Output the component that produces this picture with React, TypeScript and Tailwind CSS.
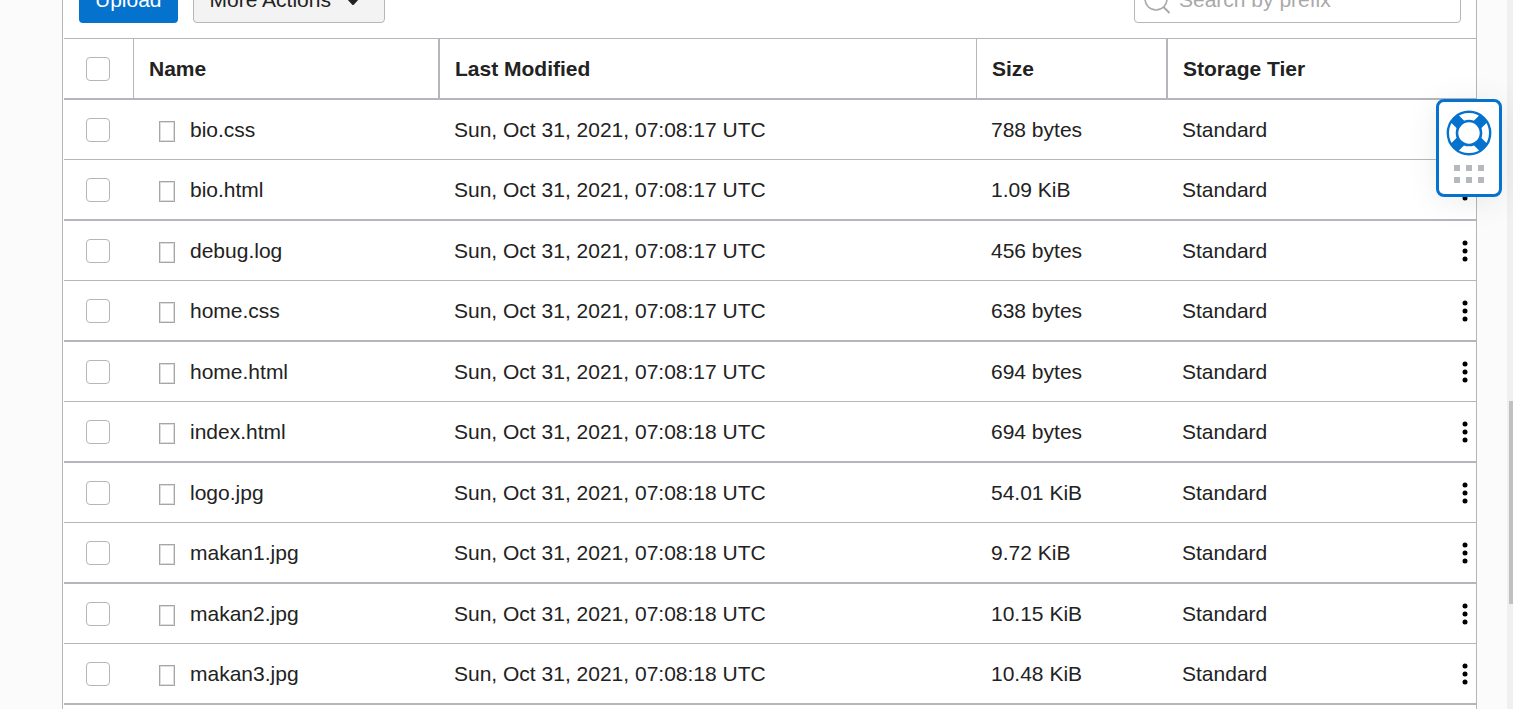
import React from "react";

type StoredObject = { name: string; modified: string; size: string; tier: string };

const objects: StoredObject[] = [
  { name: "bio.css", modified: "Sun, Oct 31, 2021, 07:08:17 UTC", size: "788 bytes", tier: "Standard" },
  { name: "bio.html", modified: "Sun, Oct 31, 2021, 07:08:17 UTC", size: "1.09 KiB", tier: "Standard" },
  { name: "debug.log", modified: "Sun, Oct 31, 2021, 07:08:17 UTC", size: "456 bytes", tier: "Standard" },
  { name: "home.css", modified: "Sun, Oct 31, 2021, 07:08:17 UTC", size: "638 bytes", tier: "Standard" },
  { name: "home.html", modified: "Sun, Oct 31, 2021, 07:08:17 UTC", size: "694 bytes", tier: "Standard" },
  { name: "index.html", modified: "Sun, Oct 31, 2021, 07:08:18 UTC", size: "694 bytes", tier: "Standard" },
  { name: "logo.jpg", modified: "Sun, Oct 31, 2021, 07:08:18 UTC", size: "54.01 KiB", tier: "Standard" },
  { name: "makan1.jpg", modified: "Sun, Oct 31, 2021, 07:08:18 UTC", size: "9.72 KiB", tier: "Standard" },
  { name: "makan2.jpg", modified: "Sun, Oct 31, 2021, 07:08:18 UTC", size: "10.15 KiB", tier: "Standard" },
  { name: "makan3.jpg", modified: "Sun, Oct 31, 2021, 07:08:18 UTC", size: "10.48 KiB", tier: "Standard" },
];

function Checkbox({ label }: { label: string }) {
  return (
    <input
      type="checkbox"
      aria-label={label}
      className="block size-6 appearance-none rounded-[4px] border border-[#b3b6ba] bg-white checked:bg-[#0572ce]"
    />
  );
}

function FileIcon() {
  return (
    <svg className="mt-1 shrink-0" width="16" height="21" viewBox="0 0 16 21" fill="none" aria-hidden="true">
      <rect x="0.5" y="0.5" width="15" height="20" stroke="#a6a6a6" />
      <rect x="1.5" y="1.5" width="13" height="18" stroke="#dedede" />
    </svg>
  );
}

function KebabIcon() {
  return (
    <svg width="6" height="22" viewBox="0 0 6 22" fill="#000" aria-hidden="true">
      <circle cx="3" cy="3" r="2.5" />
      <circle cx="3" cy="11" r="2.5" />
      <circle cx="3" cy="19" r="2.5" />
    </svg>
  );
}

function LifebuoyIcon() {
  return (
    <svg width="46" height="46" viewBox="0 0 46 46" fill="#fff" stroke="#0572ce" aria-hidden="true">
      <circle cx="23" cy="23" r="21.2" strokeWidth="2.4" />
      <path d="M8.2 8.2l29.6 29.6M37.8 8.2L8.2 37.8" strokeWidth="10.5" />
      <circle cx="23" cy="23" r="12" strokeWidth="2.6" />
    </svg>
  );
}

function GripIcon() {
  return (
    <svg width="30" height="18" viewBox="0 0 30 18" fill="#b5b9bd" aria-hidden="true">
      <rect width="6" height="6" />
      <rect x="12" width="6" height="6" />
      <rect x="24" width="6" height="6" />
      <rect y="12" width="6" height="6" />
      <rect x="12" y="12" width="6" height="6" />
      <rect x="24" y="12" width="6" height="6" />
    </svg>
  );
}

function Toolbar() {
  return (
    <div className="flex h-[38px] items-end justify-between pr-[15px] pb-[15px] pl-4">
      <div className="flex gap-[15px]">
        <button type="button" className="h-[46px] rounded-[4px] bg-[#0572ce] px-4 text-white">
          Upload
        </button>
        <button
          type="button"
          className="flex h-[46px] items-center gap-[15px] rounded-[4px] border border-[#b3b6ba] bg-[#f3f3f3] pr-6 pl-4"
        >
          More Actions
          <svg width="14" height="12" viewBox="0 0 14 12" fill="#222" aria-hidden="true">
            <path d="M0.5 4.5Q0.5 3.5 1.5 3.5H12.5Q13.5 3.5 13.5 4.5L8 10.5Q7 11.5 6 10.5Z" />
          </svg>
        </button>
      </div>
      <label className="flex h-[46px] w-[327px] items-center gap-2 rounded-[4px] border border-[#b3b6ba] bg-white pl-[9px]">
        <svg width="27" height="27" viewBox="0 0 27 27" fill="none" stroke="#a9a9a9" strokeWidth="1.6" aria-hidden="true">
          <circle cx="12" cy="12" r="11" />
          <path d="M19.5 20l6 6" strokeWidth="2" />
        </svg>
        <input
          type="text"
          aria-label="Search by prefix"
          placeholder="Search by prefix"
          className="min-w-0 flex-1 bg-transparent outline-none placeholder:text-[#a9a9a9]"
        />
      </label>
    </div>
  );
}

function ObjectTable() {
  return (
    <table className="ml-px w-[calc(100%-1px)] table-fixed border-separate border-spacing-0 border-t border-[#b3b6ba] text-left">
      <colgroup>
        <col className="w-[70px]" />
        <col className="w-[306px]" />
        <col />
        <col className="w-[191px]" />
        <col className="w-[268px]" />
        <col className="w-10" />
      </colgroup>
      <thead>
        <tr className="h-[61px] *:border-b-2 *:border-[#b3b6ba] *:p-0 *:font-bold">
          <th scope="col" className="border-r">
            <div className="pl-[22px]">
              <Checkbox label="Select all objects" />
            </div>
          </th>
          <th scope="col" className="border-r-2">
            <div className="pl-[15px]">Name</div>
          </th>
          <th scope="col" className="border-r">
            <div className="pl-[15px]">Last Modified</div>
          </th>
          <th scope="col" className="border-r-2">
            <div className="pl-[15px]">Size</div>
          </th>
          <th scope="col" colSpan={2}>
            <div className="pl-[15px]">Storage Tier</div>
          </th>
        </tr>
      </thead>
      <tbody>
        {objects.map((o) => (
          <tr
            key={o.name}
            className="h-[60px] *:border-b *:border-[#b3b6ba] *:p-0 even:h-[61px] even:*:border-b-2"
          >
            <td>
              <div className="pl-[22px]">
                <Checkbox label={`Select ${o.name}`} />
              </div>
            </td>
            <td>
              <div className="flex items-center gap-[15px] pl-[25px]">
                <FileIcon />
                {o.name}
              </div>
            </td>
            <td>
              <div className="pl-[14px]">{o.modified}</div>
            </td>
            <td>
              <div className="pl-[14px]">{o.size}</div>
            </td>
            <td>
              <div className="pl-[14px]">{o.tier}</div>
            </td>
            <td>
              <button type="button" aria-label={`Actions for ${o.name}`} className="ml-auto block pr-2">
                <KebabIcon />
              </button>
            </td>
          </tr>
        ))}
      </tbody>
    </table>
  );
}

export default function App() {
  return (
    <div className="flex h-screen overflow-hidden bg-[#fbfbfb] font-['Liberation_Sans',Arial,sans-serif] text-[21px] leading-7 text-[#222]">
      <main className="ml-[62px] min-w-0 flex-1 border-x border-[#b3b6ba] bg-white">
        <Toolbar />
        <ObjectTable />
      </main>
      <div className="ml-[30px] w-[6px] bg-[#f0f0f0] pt-[401px] pl-[2px]" aria-hidden="true">
        <div className="h-[203px] bg-[#c1c1c1]" />
      </div>
      <button
        type="button"
        aria-label="Help"
        className="absolute top-[99px] right-[11px] flex w-[66px] flex-col items-center gap-[9px] rounded-lg border-[3px] border-[#0572ce] bg-white pt-2 pb-[11px] shadow-[0_4px_32px_rgba(0,0,0,0.08)]"
      >
        <LifebuoyIcon />
        <GripIcon />
      </button>
    </div>
  );
}
